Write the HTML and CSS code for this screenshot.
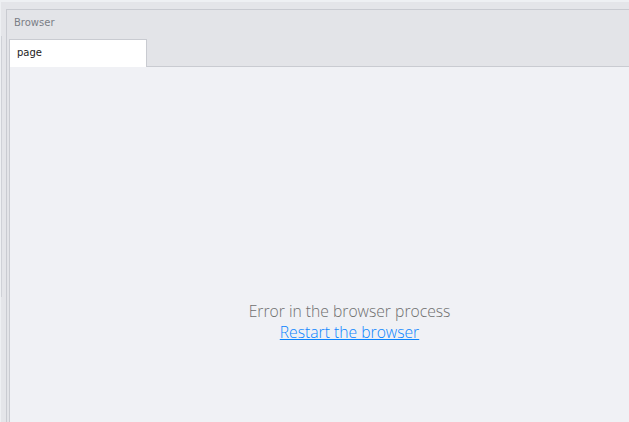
FILE: index.html
```
<html>
    <head>
        <title>Browser</title>

        <link rel="stylesheet" href="styles.css">
    </head>

    <body>
        <div class="app">
            <div class="sideStrip"><div class="sideThumb"></div></div>
            <div class="panel">
                <div class="panelHeader">Browser</div>
                <div class="tabBar">
                    <div class="tab">page</div>
                    <div class="tabRest"></div>
                </div>
                <div class="content">
                    <div class="message">
                        <p class="errorText">Error in the browser process</p>
                        <a class="restartLink" href="#">Restart the browser</a>
                    </div>
                </div>
            </div>
        </div>
    </body>
</html>
```

FILE: styles.css
```
body {
    margin: 0;
    background-color: #e4e5e9;
    font-family: "DejaVu Sans", sans-serif;
    overflow: hidden;
}
.app {
    display: flex;
    width: 629px;
    height: 422px;
    border-top: 2px solid #eef0f3;
    box-sizing: border-box;
}
.sideStrip {
    width: 6px;
    background-color: #e4e5e9;
    border-left: 1px solid #eef0f3;
    box-sizing: border-box;
}
.sideThumb {
    width: 1px;
    height: 261px;
    margin-top: 34px;
    background-color: #cfd1d7;
}
.panel {
    flex: 1;
    display: flex;
    flex-direction: column;
    margin-top: 7px;
    border-top: 1px solid #c9cbd1;
    border-left: 1px solid #c9cbd1;
    background-color: #e3e4e8;
}
.panelHeader {
    height: 29px;
    line-height: 26px;
    padding-left: 7px;
    font-size: 10px;
    color: #7b7e86;
}
.tabBar {
    display: flex;
    height: 28px;
    padding-left: 2px;
}
.tab {
    width: 138px;
    background-color: #ffffff;
    border-top: 1px solid #c9cbd1;
    border-right: 1px solid #c9cbd1;
    border-left: 1px solid #c9cbd1;
    padding-left: 7px;
    line-height: 26px;
    font-size: 10px;
    color: #1c1c1c;
    box-sizing: border-box;
}
.tabRest {
    flex: 1;
    border-bottom: 1px solid #c9cbd1;
}
.content {
    flex: 1;
    margin-left: 2px;
    border-left: 1px solid #c9cbd1;
    background-color: #f0f1f5;
    display: flex;
    justify-content: center;
    padding-top: 234px;
    padding-left: 60px;
}
.message {
    text-align: center;
    font-family: "Open Sans", sans-serif;
    font-weight: 300;
    font-size: 15.7px;
}
.errorText {
    margin: 0;
    line-height: 21px;
    color: #6e6e6e;
}
.restartLink {
    line-height: 21px;
    color: #0a84ff;
    text-decoration: underline;
}
```
